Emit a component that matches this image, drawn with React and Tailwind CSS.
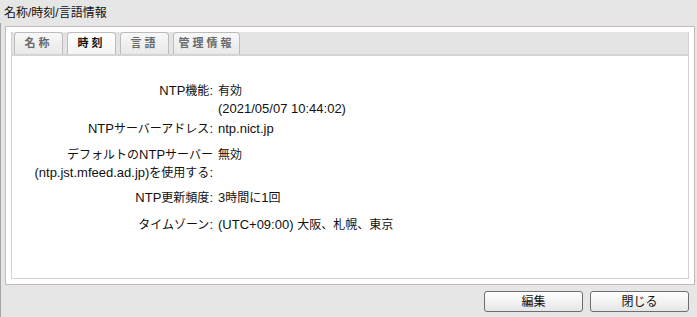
const rows = [
  { label: ["NTP機能:"], value: ["有効", "(2021/05/07 10:44:02)"], mt: "mt-0" },
  { label: ["NTPサーバーアドレス:"], value: ["ntp.nict.jp"], mt: "mt-[2px]" },
  { label: ["デフォルトのNTPサーバー", "(ntp.jst.mfeed.ad.jp)を使用する:"], value: ["無効"], mt: "mt-2" },
  { label: ["NTP更新頻度:"], value: ["3時間に1回"], mt: "mt-[7px]" },
  { label: ["タイムゾーン:"], value: ["(UTC+09:00) 大阪、札幌、東京"], mt: "mt-[9px]" },
]

const tabs = [
  { name: "名称", w: "w-[49px]" },
  { name: "時刻", w: "w-[49px]", active: true },
  { name: "言語", w: "w-[49px]" },
  { name: "管理情報", w: "w-[67px]" },
]

// latin runs a bit larger than the kana/kanji runs
function Txt({ s }) {
  const parts = s.split(/([\u3000-\u9fff\uff00-\uffef]+)/).filter(Boolean)
  return (
    <>
      {parts.map((p, i) =>
        /[\u3000-\u9fff\uff00-\uffef]/.test(p) ? (
          <span key={i} className="text-[12px]">{p}</span>
        ) : (
          <span key={i} className="text-[13px]">{p}</span>
        )
      )}
    </>
  )
}

export default function App() {
  return (
    <div
      className="w-[697px] h-[317px] bg-[#e6e6e6] text-[12px] text-[#111] overflow-hidden flex flex-col"
      style={{ fontFamily: "'Liberation Sans', 'Noto Sans CJK JP', sans-serif" }}
    >
      {/* title */}
      <div className="h-[23px] pl-[4px] pt-[4px] leading-[18px]">名称/時刻/言語情報</div>

      <div className="flex-1 border-l border-[#a4a4a4] flex flex-col">
        {/* outer panel */}
        <div className="mt-[3px] ml-[4px] w-[690px] h-[259px] border border-[#c6b8b8] bg-white p-[5px]">
          <div className="h-full flex flex-col border border-[#d2d2d2] border-t-0">
            {/* tab strip */}
            <div className="h-[24px] bg-[#e4e4e4] flex items-end gap-[4px] pl-[2px] border-b-2 border-[#d4d4d4]">
              {tabs.map((t) => (
                <div
                  key={t.name}
                  className={`${t.w} h-[22px] rounded-t-[4px] border border-b-0 border-[#bcbcbc] flex items-center justify-center text-[11px] font-bold tracking-[3px] ${
                    t.active
                      ? "bg-gradient-to-b from-white to-[#f4f4f4] text-[#111]"
                      : "bg-gradient-to-b from-[#f8f8f8] to-[#e8e8e8] text-[#6a6a6a]"
                  }`}
                >
                  {t.name}
                </div>
              ))}
            </div>

            {/* content */}
            <div className="flex-1 pt-[26px]">
              {rows.map((r, i) => (
                <div key={i} className={`flex gap-[5px] leading-[18px] ${r.mt}`}>
                  <div className="w-[201px] text-right whitespace-nowrap">
                    {r.label.map((l) => (
                      <div key={l} className="h-[18px]"><Txt s={l} /></div>
                    ))}
                  </div>
                  <div className="whitespace-nowrap">
                    {r.value.map((v) => (
                      <div key={v} className="h-[18px]"><Txt s={v} /></div>
                    ))}
                  </div>
                </div>
              ))}
            </div>
          </div>
        </div>

        {/* buttons */}
        <div className="flex justify-end gap-[7px] pr-[8px] mt-[6px]">
          {["編集", "閉じる"].map((b) => (
            <button
              key={b}
              className="w-[99px] h-[21px] rounded-[3px] border border-[#6e6e6e] bg-gradient-to-b from-white to-[#e6e6e6] text-[12px] text-[#111] leading-none"
            >
              {b}
            </button>
          ))}
        </div>
      </div>
    </div>
  )
}
